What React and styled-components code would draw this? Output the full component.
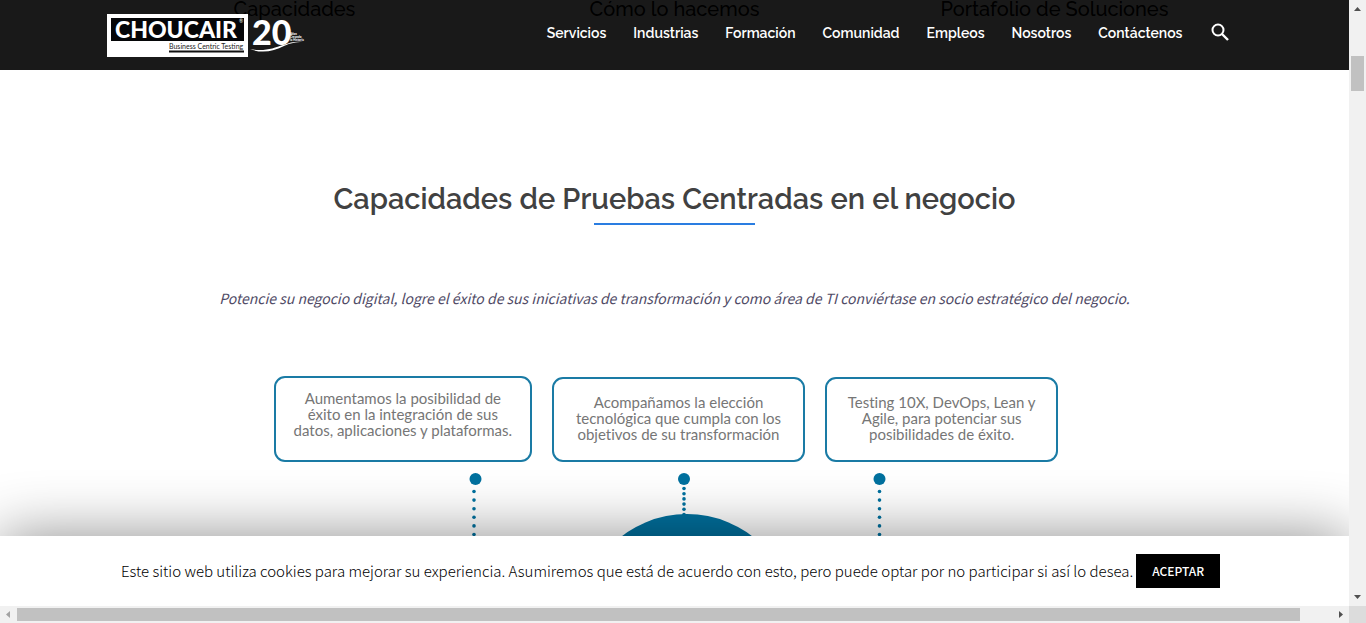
import React from "react";
import styled, { createGlobalStyle } from "styled-components";

const heading = `"Raleway", "Lato", "Open Sans", sans-serif`;
const body = `"Source Sans Pro", "Noto Sans CJK JP", "Noto Sans", sans-serif`;
const blue = "#00719f";

const GlobalStyle = createGlobalStyle`
  * { box-sizing: border-box; }
  body { margin: 0; background: #fff; font-family: ${body}; overflow: hidden; }
  h2, h3, p, ul { margin: 0; padding: 0; font-weight: inherit; }
`;

const Window = styled.div`
  display: grid;
  grid-template-columns: minmax(0, 1fr) 17px;
  grid-template-rows: minmax(0, 1fr) 17px;
  height: 100vh;
  overflow: hidden;
`;

const Viewport = styled.div`
  position: relative;
  overflow: hidden;
`;

const Header = styled.header`
  position: absolute;
  inset: 0 0 auto 0;
  z-index: 2;
  height: 70px;
  background: rgba(0, 0, 0, 0.9);
`;

const HeaderInner = styled.div`
  display: flex;
  justify-content: space-between;
  align-items: flex-start;
  max-width: 1140px;
  margin: 0 auto;
  padding: 12px 15px 0 2px;
`;

const LogoLink = styled.a`
  display: block;
  svg { display: block; }
`;

const Nav = styled.nav`
  display: flex;
  align-items: center;
  gap: 27px;
  height: 42px;
`;

const NavLink = styled.a`
  color: #fff;
  font: 600 14px/20px ${heading};
  text-decoration: none;
`;

const SearchButton = styled.button`
  display: flex;
  padding: 0;
  border: 0;
  background: none;
  color: #fff;
`;

const Content = styled.main`
  display: flex;
  flex-direction: column;
  align-items: center;
`;

const Features = styled.section`
  display: grid;
  grid-template-columns: repeat(3, 1fr);
  width: 100%;
  max-width: 1140px;
`;

const FeatureTitle = styled.h3`
  color: #000;
  font: 500 20px/18px ${heading};
  text-align: center;
`;

const SectionTitle = styled.h2`
  margin-top: 161px;
  color: #414141;
  font: 600 29px/40px ${heading};
  text-align: center;
  &::after {
    content: "";
    display: block;
    width: 161px;
    height: 2px;
    margin: 4px auto 0;
    background: #2a7de1;
  }
`;

const Lead = styled.p`
  margin-top: 61px;
  color: #504b66;
  font: italic 400 14px/24px ${body};
  text-align: center;
`;

const Diagram = styled.section`
  width: 785px;
  max-width: 100%;
  margin: 66px 17px 0 0;
`;

const Cards = styled.div`
  display: grid;
  grid-template-columns: 259fr 253fr 234fr;
  align-items: end;
  gap: 20px;
`;

const Card = styled.p`
  min-height: ${(p) => (p.$tall ? 86 : 85)}px;
  padding: ${(p) => (p.$tall ? 12 : 15)}px 8px 0;
  border: 2px solid #1a7ba5;
  border-radius: 11px;
  color: #767676;
  font: 400 15px/16px "Lato", sans-serif;
  font-variant-ligatures: none;
  text-align: center;
  span { display: block; white-space: nowrap; }
`;

const Connectors = styled.svg`
  display: block;
  width: 100%;
  height: auto;
`;

const CookieBar = styled.aside`
  position: absolute;
  inset: auto 0 0 0;
  display: flex;
  justify-content: center;
  align-items: center;
  gap: 3px;
  height: 70px;
  padding-right: 8px;
  background: #fff;
  box-shadow: 0 0 60px rgba(0, 0, 0, 0.45);
  color: #000;
  font: 300 15px/20px ${body};
`;

const AcceptButton = styled.button`
  height: 34px;
  padding: 0 16px;
  border: 0;
  background: #000;
  color: #fff;
  font: 500 12px/20px ${body};
`;

const Bar = styled.div`
  display: flex;
  flex-direction: ${(p) => (p.$vertical ? "column" : "row")};
  align-items: center;
  background: #f1f1f1;
`;

const Arrow = styled.svg`
  flex: none;
  width: 17px;
  height: 17px;
  fill: ${(p) => (p.$muted ? "#a3a3a3" : "#505050")};
`;

const Track = styled.div`
  flex: 1;
  display: flex;
  flex-direction: ${(p) => (p.$vertical ? "column" : "row")};
  align-self: stretch;
  padding: ${(p) => (p.$vertical ? "39px 2px 0" : "2px 32px 2px 0")};
`;

const Thumb = styled.div`
  background: #c1c1c1;
  ${(p) => (p.$vertical ? "height: 35px;" : "flex: 1;")}
`;

const Corner = styled.div`
  background: #dcdcdc;
`;

const links = ["Servicios", "Industrias", "Formación", "Comunidad", "Empleos", "Nosotros", "Contáctenos"];

const cards = [
  ["Aumentamos la posibilidad de", "éxito en la integración de sus", "datos, aplicaciones y plataformas."],
  ["Acompañamos la elección", "tecnológica que cumpla con los", "objetivos de su transformación"],
  ["Testing 10X, DevOps, Lean y", "Agile, para potenciar sus", "posibilidades de éxito."],
];

function Logo() {
  return (
    <svg width="200" height="46" viewBox="0 0 200 46" role="img" aria-label="Choucair">
      <rect x="0" y="2" width="141" height="43" fill="#fff" />
      <rect x="4" y="6" width="133" height="23" fill="#050608" />
      <g fontFamily="Lato, sans-serif">
        <text x="8" y="26" fontSize="23" fontWeight="900" fill="#fff">CHOUCAIR</text>
        <text x="132" y="11" fontSize="5" fill="#fff">®</text>
        <text x="62" y="37" fontSize="7" fill="#222">Business Centric Testing</text>
        <text x="145" y="33" fontSize="34" fontWeight="900" fill="#fff">20</text>
        <g fontSize="3" fontWeight="900" fill="#fff">
          <text x="183" y="23">Años</text>
          <text x="183" y="26">Creando</text>
          <text x="183" y="29">la Historia</text>
        </g>
      </g>
      <path d="M62 39.500h75" stroke="#111" strokeWidth="2" />
      <path d="M143 37c14 3 24-1 33-4 8-3 13-4 20-3-8 0-12 1-19 4-10 5-22 8-34 3z" fill="#fff" />
    </svg>
  );
}

function Dots({ x, from, step, count }) {
  return Array.from({ length: count }, (_, i) => (
    <circle key={i} cx={x} cy={from + i * step} r="1.800" fill={blue} />
  ));
}

export default function App() {
  return (
    <Window>
      <GlobalStyle />
      <Viewport>
        <Header>
          <HeaderInner>
            <LogoLink href="#inicio"><Logo /></LogoLink>
            <Nav aria-label="Principal">
              {links.map((l) => <NavLink href={"#" + l} key={l}>{l}</NavLink>)}
              <SearchButton aria-label="Buscar">
                <svg width="20" height="20" viewBox="0 0 20 20" fill="none" stroke="currentColor">
                  <circle cx="8" cy="7" r="5.500" strokeWidth="2" />
                  <path d="M12 11l6 6" strokeWidth="2.400" />
                </svg>
              </SearchButton>
            </Nav>
          </HeaderInner>
        </Header>
        <Content>
          <Features>
            <FeatureTitle>Capacidades</FeatureTitle>
            <FeatureTitle>Cómo lo hacemos</FeatureTitle>
            <FeatureTitle>Portafolio de Soluciones</FeatureTitle>
          </Features>
          <SectionTitle>Capacidades de Pruebas Centradas en el negocio</SectionTitle>
          <Lead>
            Potencie su negocio digital, logre el éxito de sus iniciativas de transformación y como área de TI
            conviértase en socio estratégico del negocio.
          </Lead>
          <Diagram>
            <Cards>
              {cards.map((lines, i) => (
                <Card key={i} $tall={i === 0}>
                  {lines.map((line) => <span key={line}>{line}</span>)}
                </Card>
              ))}
            </Cards>
            <Connectors viewBox="0 -1 785 120" aria-hidden="true">
              <circle cx="201.500" cy="16" r="6" fill={blue} />
              <circle cx="410" cy="16" r="6" fill={blue} />
              <circle cx="605.500" cy="16" r="6" fill={blue} />
              <Dots x={200} from={28.5} step={8.6} count={10} />
              <Dots x={410} from={25.5} step={5.2} count={6} />
              <Dots x={605.5} from={28.5} step={8.6} count={10} />
              <circle cx="413" cy="158" r="107" fill={blue} />
            </Connectors>
          </Diagram>
        </Content>
        <CookieBar aria-label="Aviso de cookies">
          <p>
            Este sitio web utiliza cookies para mejorar su experiencia. Asumiremos que está de acuerdo con esto,
            pero puede optar por no participar si así lo desea.
          </p>
          <AcceptButton>ACEPTAR</AcceptButton>
        </CookieBar>
      </Viewport>
      <Bar $vertical aria-hidden="true">
        <Arrow viewBox="0 0 17 17"><path d="M5 11l3.500-4 3.500 4z" /></Arrow>
        <Track $vertical><Thumb $vertical /></Track>
        <Arrow viewBox="0 0 17 17"><path d="M5 6l3.500 4 3.500-4z" /></Arrow>
      </Bar>
      <Bar aria-hidden="true">
        <Arrow $muted viewBox="0 0 17 17"><path d="M10 5l-4 3.500 4 3.500z" /></Arrow>
        <Track><Thumb /></Track>
        <Arrow viewBox="0 0 17 17"><path d="M7 5l4 3.500-4 3.500z" /></Arrow>
      </Bar>
      <Corner />
    </Window>
  );
}
